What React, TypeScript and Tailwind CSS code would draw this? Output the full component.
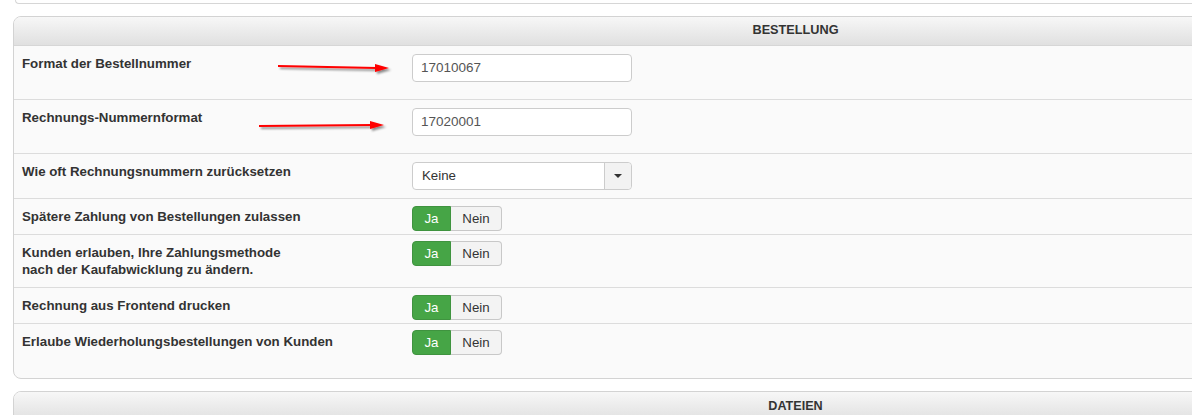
const Arrow = ({ w, rise }: { w: number; rise: number }) => {
  return (
    <svg width={w + 6} height={20} viewBox={`0 0 ${w + 6} 20`} className="overflow-visible">
      <defs>
        <filter id="sh" x="-10%" y="-100%" width="120%" height="300%">
          <feDropShadow dx="2" dy="2" stdDeviation="1" floodColor="#000" floodOpacity="0.45" />
        </filter>
      </defs>
      <g filter="url(#sh)">
        <path d={`M0 8 L${w - 12} ${8 + rise}`} stroke="#f00" strokeWidth="2.2" fill="none" />
        <path d={`M${w - 14} ${4 + rise} L${w} ${8 + rise} L${w - 14} ${12 + rise} Z`} fill="#f00" />
      </g>
    </svg>
  );
};

const TextInput = ({ value }: { value: string }) => {
  return (
    <div className="w-[220px] h-[28px] border border-[#ccc] rounded-[4px] bg-white flex items-center pl-[8px] text-[13.5px] text-[#555]">
      {value}
    </div>
  );
};

const Toggle = () => {
  return (
    <div className="flex h-[25px] text-[13.3px]">
      <div className="w-[39px] flex items-center justify-center bg-[#46a546] border border-[#3f933f] text-white rounded-l-[4px]">Ja</div>
      <div className="w-[51px] flex items-center justify-center bg-[#f3f3f3] border border-l-0 border-[#c8c8c8] text-[#333] rounded-r-[4px]">Nein</div>
    </div>
  );
};

const Row = ({
  label,
  h,
  pt,
  last,
  children,
  arrow,
}: {
  label: React.ReactNode;
  h: string;
  pt: string;
  last?: boolean;
  children: React.ReactNode;
  arrow?: React.ReactNode;
}) => {
  return (
    <div className={`relative flex items-start ${h} ${last ? "" : "border-b border-[#dcdcdc]"}`}>
      <div className="w-[398px] pl-[8px] pt-[9px] leading-[17px] text-[13.3px] font-bold text-[#333]">{label}</div>
      <div className={pt}>{children}</div>
      {arrow}
    </div>
  );
};

export default function App() {
  return (
    <div className="w-[1192px] h-[415px] overflow-hidden bg-white font-['Liberation_Sans',Arial,sans-serif]">
      <div className="ml-[15px] w-[1600px] h-[4px] border-b border-l border-[#d6d6d6] rounded-bl-[6px]" />
      <div className="ml-[13px] mt-[12px] w-[1565px] border border-[#d3d3d3] rounded-[8px] bg-[#fafafa] overflow-hidden">
        <div className="h-[29px] bg-gradient-to-b from-[#f7f7f7] to-[#e0e0e0] border-b border-[#d6d6d6] flex items-center justify-center text-[12.7px] font-bold text-[#333]">
          BESTELLUNG
        </div>
        <Row
          label="Format der Bestellnummer"
          h="h-[54px]"
          pt="pt-[8px]"
          arrow={
            <div className="absolute left-[264px] top-[12px]">
              <Arrow w={111} rise={2} />
            </div>
          }
        >
          <TextInput value="17010067" />
        </Row>
        <Row
          label="Rechnungs-Nummernformat"
          h="h-[54px]"
          pt="pt-[8px]"
          arrow={
            <div className="absolute left-[245px] top-[18px]">
              <Arrow w={125} rise={-1} />
            </div>
          }
        >
          <TextInput value="17020001" />
        </Row>
        <Row label="Wie oft Rechnungsnummern zurücksetzen" h="h-[45px]" pt="pt-[8px]">
          <div className="w-[220px] h-[28px] border border-[#ccc] rounded-[4px] bg-white flex text-[13.3px] text-[#333]">
            <div className="flex-1 flex items-center pl-[9px]">Keine</div>
            <div className="w-[27px] border-l border-[#ccc] bg-[#f2f2f2] rounded-r-[4px] flex items-center justify-center">
              <div className="w-0 h-0 border-l-[4px] border-r-[4px] border-t-[4px] border-l-transparent border-r-transparent border-t-[#333]" />
            </div>
          </div>
        </Row>
        <Row label="Spätere Zahlung von Bestellungen zulassen" h="h-[36px]" pt="pt-[7px]">
          <Toggle />
        </Row>
        <Row
          label={
            <>
              Kunden erlauben, Ihre Zahlungsmethode
              <br />
              nach der Kaufabwicklung zu ändern.
            </>
          }
          h="h-[53px]"
          pt="pt-[6px]"
        >
          <Toggle />
        </Row>
        <Row label="Rechnung aus Frontend drucken" h="h-[36px]" pt="pt-[7px]">
          <Toggle />
        </Row>
        <Row label="Erlaube Wiederholungsbestellungen von Kunden" h="h-[54px]" pt="pt-[6px]" last>
          <Toggle />
        </Row>
      </div>
      <div className="ml-[13px] mt-[12px] w-[1565px] border border-[#d3d3d3] rounded-t-[8px] bg-[#fafafa] overflow-hidden">
        <div className="h-[29px] bg-gradient-to-b from-[#f7f7f7] to-[#e0e0e0] flex items-center justify-center text-[12.6px] font-bold text-[#333]">
          DATEIEN
        </div>
      </div>
    </div>
  );
}
